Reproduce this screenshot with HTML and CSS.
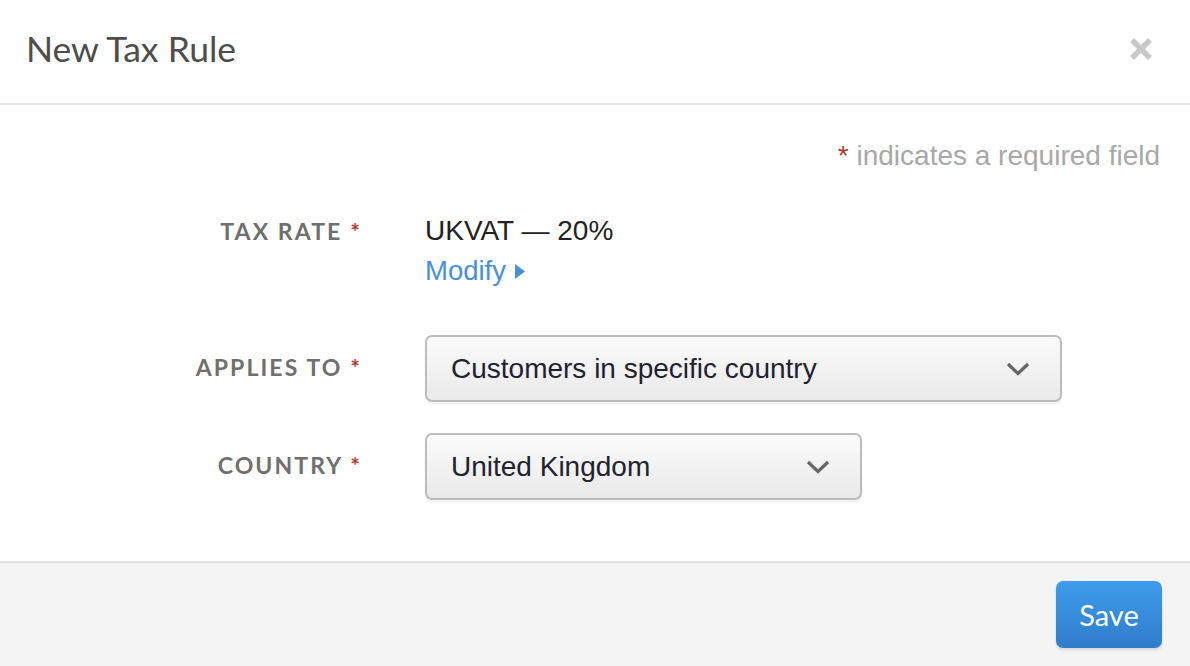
FILE: index.html
```html
<!DOCTYPE html>
<html>
<head>
<meta charset="utf-8">
<link rel="stylesheet" href="styles.css">
</head>
<body>
<div class="modal">
  <header class="modal-header">
    <h1 class="modal-title">New Tax Rule</h1>
    <button class="close" aria-label="Close">
      <svg width="24" height="24" viewBox="0 0 24 24"><path d="M3 3 L21 21 M21 3 L3 21" stroke="#c8c8c8" stroke-width="5.5" stroke-linecap="butt"/></svg>
    </button>
  </header>
  <main class="modal-body">
    <p class="req-note"><span class="star">*</span> indicates a required field</p>
    <div class="form">
      <div class="row row-rate">
        <div class="label">TAX RATE <span class="star">*</span></div>
        <div class="field">
          <div class="value">UKVAT — 20%</div>
          <a class="modify" href="#">Modify <svg width="12" height="17" viewBox="0 0 12 17"><path d="M1 1 L11 8.5 L1 16 Z" fill="#4a90d9"/></svg></a>
        </div>
      </div>
      <div class="row row-select">
        <div class="label">APPLIES TO <span class="star">*</span></div>
        <div class="field">
          <div class="select select-wide">
            <span>Customers in specific country</span>
            <svg class="chev" width="24" height="14" viewBox="0 0 24 14"><path d="M2 2 L12 11.5 L22 2" fill="none" stroke="#666" stroke-width="3.2"/></svg>
          </div>
        </div>
      </div>
      <div class="row row-select">
        <div class="label">COUNTRY <span class="star">*</span></div>
        <div class="field">
          <div class="select select-narrow">
            <span>United Kingdom</span>
            <svg class="chev" width="24" height="14" viewBox="0 0 24 14"><path d="M2 2 L12 11.5 L22 2" fill="none" stroke="#666" stroke-width="3.2"/></svg>
          </div>
        </div>
      </div>
    </div>
  </main>
  <footer class="modal-footer">
    <button class="save">Save</button>
  </footer>
</div>
</body>
</html>
```
FILE: styles.css
```css
* { box-sizing: border-box; }
html, body { margin: 0; padding: 0; background: #fff; }
body { width: 1190px; height: 666px; overflow: hidden; font-family: "Liberation Sans", Arial, sans-serif; }
.modal { display: flex; flex-direction: column; height: 666px; }
.modal-header {
  height: 105px;
  border-bottom: 2px solid #e6e6e6;
  display: flex; align-items: center; justify-content: space-between;
  padding: 0 37px 6px 26px;
}
.modal-title {
  margin: 0;
  font-family: Lato, sans-serif;
  font-weight: 400;
  font-size: 35.5px;
  color: #4d4d4d;
}
.close { background: none; border: 0; padding: 0; width: 24px; height: 24px; display: flex; }
.modal-body { flex: 1; padding: 35px 30px 0 30px; }
.req-note {
  margin: 0; text-align: right;
  font-size: 28px; line-height: 32px; color: #a8a8a8;
}
.star { color: #b23b33; }
.form { display: flex; flex-direction: column; margin-top: 42px; }
.row { display: grid; grid-template-columns: 332px 1fr; column-gap: 63px; }
.label {
  font-family: Lato, sans-serif; font-weight: 700;
  font-size: 23px; letter-spacing: 2.1px; color: #6f6f6f;
  text-align: right;
}
.row-rate .label { padding-top: 3px; }
.value { font-size: 28px; color: #222; line-height: 34px; }
.modify { display: inline-flex; align-items: center; gap: 8px; font-size: 27.5px; color: #4a90d9; text-decoration: none; line-height: 46px; }
.row-select { margin-top: 41px; }
.row-select + .row-select { margin-top: 31px; }
.row-select .label { padding-top: 18px; }
.select {
  height: 67px;
  border: 2px solid #bcbcbc;
  border-radius: 7px;
  background: linear-gradient(#fbfbfb, #e9e9e9);
  box-shadow: 0 3px 2px rgba(0,0,0,0.05);
  display: flex; align-items: center; justify-content: space-between;
  padding: 0 30px 0 24px;
  font-size: 28px; color: #1f2230;
}
.select-wide { width: 637px; }
.select-narrow { width: 437px; }
.modal-footer {
  height: 105px;
  background: #f4f4f4;
  border-top: 2px solid #e3e3e3;
  display: flex; justify-content: flex-end; align-items: flex-start;
  padding: 18px 28px 0 0;
}
.save {
  width: 106px; height: 67px;
  border: 0; border-radius: 7px;
  background: linear-gradient(#3f9cec, #2f7dcb);
  box-shadow: 0 2px 3px rgba(0,0,0,0.12);
  color: #fff;
  font-family: Lato, sans-serif; font-size: 29px;
}
```
